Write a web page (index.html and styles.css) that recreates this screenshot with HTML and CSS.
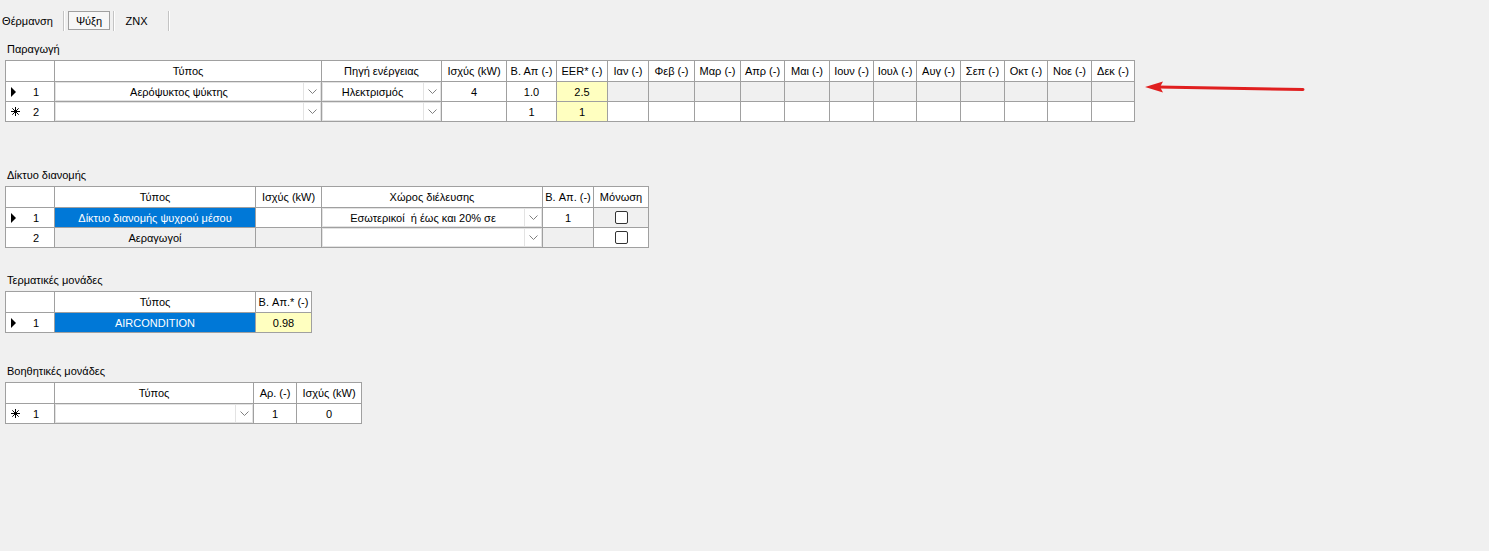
FILE: index.html
```html
<!DOCTYPE html>
<html lang="el">
<head>
  <meta charset="UTF-8" />
  <title>Ψύξη</title>
  <link rel="stylesheet" href="styles.css">
</head>
<body>

  <!-- toolbar -->
  <div class="toolbar">
    <span class="tool tool-heat">Θέρμανση</span>
    <span class="sep"></span>
    <span class="tool tool-cool checked">Ψύξη</span>
    <span class="sep"></span>
    <span class="tool tool-znx">ZNX</span>
    <span class="sep sep-last"></span>
  </div>

  <!-- Παραγωγή -->
  <div class="section sec-prod">
    <div class="caption">Παραγωγή</div>
    <div class="grid grid-prod">
      <div class="hd"></div>
      <div class="hd">Τύπος</div>
      <div class="hd">Πηγή ενέργειας</div>
      <div class="hd">Ισχύς (kW)</div>
      <div class="hd">B. Aπ (-)</div>
      <div class="hd">EER* (-)</div>
      <div class="hd">Ιαν (-)</div>
      <div class="hd">Φεβ (-)</div>
      <div class="hd">Μαρ (-)</div>
      <div class="hd">Απρ (-)</div>
      <div class="hd">Μαι (-)</div>
      <div class="hd">Ιουν (-)</div>
      <div class="hd">Ιουλ (-)</div>
      <div class="hd">Αυγ (-)</div>
      <div class="hd">Σεπ (-)</div>
      <div class="hd">Οκτ (-)</div>
      <div class="hd">Νοε (-)</div>
      <div class="hd">Δεκ (-)</div>

      <div class="rh"><span class="mark"><i class="tri"></i></span><span class="num">1</span></div>
      <div class="c"><div class="combo"><span class="combo-text combo-left">Αερόψυκτος ψύκτης</span><span class="combo-btn"><svg width="9" height="5" viewBox="0 0 9 5"><path d="M0.5 0.5 L4.5 4.5 L8.5 0.5" fill="none" stroke="#808080"/></svg></span></div></div>
      <div class="c"><div class="combo"><span class="combo-text">Ηλεκτρισμός</span><span class="combo-btn"><svg width="9" height="5" viewBox="0 0 9 5"><path d="M0.5 0.5 L4.5 4.5 L8.5 0.5" fill="none" stroke="#808080"/></svg></span></div></div>
      <div class="c">4</div>
      <div class="c">1.0</div>
      <div class="c yl">2.5</div>
      <div class="c ro"></div>
      <div class="c ro"></div>
      <div class="c ro"></div>
      <div class="c ro"></div>
      <div class="c ro"></div>
      <div class="c ro"></div>
      <div class="c ro"></div>
      <div class="c ro"></div>
      <div class="c ro"></div>
      <div class="c ro"></div>
      <div class="c ro"></div>
      <div class="c ro"></div>

      <div class="rh"><span class="mark"><svg class="star" width="9" height="9" viewBox="0 0 9 9"><path d="M4.5 0 V9 M0 4.5 H9 M1.3 1.3 L7.7 7.7 M7.7 1.3 L1.3 7.7" stroke="#000" stroke-width="1"/></svg></span><span class="num">2</span></div>
      <div class="c"><div class="combo"><span class="combo-text"></span><span class="combo-btn"><svg width="9" height="5" viewBox="0 0 9 5"><path d="M0.5 0.5 L4.5 4.5 L8.5 0.5" fill="none" stroke="#808080"/></svg></span></div></div>
      <div class="c"><div class="combo"><span class="combo-text"></span><span class="combo-btn"><svg width="9" height="5" viewBox="0 0 9 5"><path d="M0.5 0.5 L4.5 4.5 L8.5 0.5" fill="none" stroke="#808080"/></svg></span></div></div>
      <div class="c"></div>
      <div class="c">1</div>
      <div class="c yl">1</div>
      <div class="c"></div>
      <div class="c"></div>
      <div class="c"></div>
      <div class="c"></div>
      <div class="c"></div>
      <div class="c"></div>
      <div class="c"></div>
      <div class="c"></div>
      <div class="c"></div>
      <div class="c"></div>
      <div class="c"></div>
      <div class="c"></div>
    </div>
  </div>

  <!-- Δίκτυο διανομής -->
  <div class="section sec-net">
    <div class="caption">Δίκτυο διανομής</div>
    <div class="grid grid-net">
      <div class="hd"></div>
      <div class="hd">Τύπος</div>
      <div class="hd">Ισχύς (kW)</div>
      <div class="hd">Χώρος διέλευσης</div>
      <div class="hd">B. Απ. (-)</div>
      <div class="hd">Μόνωση</div>

      <div class="rh"><span class="mark"><i class="tri"></i></span><span class="num">1</span></div>
      <div class="c sel">Δίκτυο διανομής ψυχρού μέσου</div>
      <div class="c"></div>
      <div class="c"><div class="combo"><span class="combo-text">Εσωτερικοί &nbsp;ή έως και 20% σε</span><span class="combo-btn"><svg width="9" height="5" viewBox="0 0 9 5"><path d="M0.5 0.5 L4.5 4.5 L8.5 0.5" fill="none" stroke="#808080"/></svg></span></div></div>
      <div class="c">1</div>
      <div class="c ro"><span class="check"></span></div>

      <div class="rh"><span class="mark"></span><span class="num">2</span></div>
      <div class="c ro">Αεραγωγοί</div>
      <div class="c ro"></div>
      <div class="c"><div class="combo"><span class="combo-text"></span><span class="combo-btn"><svg width="9" height="5" viewBox="0 0 9 5"><path d="M0.5 0.5 L4.5 4.5 L8.5 0.5" fill="none" stroke="#808080"/></svg></span></div></div>
      <div class="c ro"></div>
      <div class="c"><span class="check"></span></div>
    </div>
  </div>

  <!-- Τερματικές μονάδες -->
  <div class="section sec-term">
    <div class="caption">Τερματικές μονάδες</div>
    <div class="grid grid-term">
      <div class="hd"></div>
      <div class="hd">Τύπος</div>
      <div class="hd">B. Απ.* (-)</div>

      <div class="rh"><span class="mark"><i class="tri"></i></span><span class="num">1</span></div>
      <div class="c sel">AIRCONDITION</div>
      <div class="c yl">0.98</div>
    </div>
  </div>

  <!-- Βοηθητικές μονάδες -->
  <div class="section sec-aux">
    <div class="caption">Βοηθητικές μονάδες</div>
    <div class="grid grid-aux">
      <div class="hd"></div>
      <div class="hd">Τύπος</div>
      <div class="hd">Αρ. (-)</div>
      <div class="hd">Ισχύς (kW)</div>

      <div class="rh"><span class="mark"><svg class="star" width="9" height="9" viewBox="0 0 9 9"><path d="M4.5 0 V9 M0 4.5 H9 M1.3 1.3 L7.7 7.7 M7.7 1.3 L1.3 7.7" stroke="#000" stroke-width="1"/></svg></span><span class="num">1</span></div>
      <div class="c"><div class="combo"><span class="combo-text"></span><span class="combo-btn"><svg width="9" height="5" viewBox="0 0 9 5"><path d="M0.5 0.5 L4.5 4.5 L8.5 0.5" fill="none" stroke="#808080"/></svg></span></div></div>
      <div class="c">1</div>
      <div class="c">0</div>
    </div>
  </div>

  <!-- annotation arrow -->
  <svg class="red-arrow" width="170" height="24" viewBox="0 0 170 24">
    <path d="M18 11 L163 13.5" stroke="#e01f1f" stroke-width="3" stroke-linecap="round"/>
    <path d="M5 11 L23 5.5 L20 11 L23 16.5 Z" fill="#e01f1f"/>
  </svg>

</body>
</html>
```

FILE: styles.css
```css
body {
  margin: 0;
  background: #f0f0f0;
  font-family: "Liberation Sans", Arial, sans-serif;
  font-size: 11px;
  color: #000;
  position: relative;
  height: 551px;
  overflow: hidden;
}

/* toolbar */
.toolbar {
  display: flex;
  margin-top: 11px;
  height: 20px;
}
.tool {
  display: flex;
  align-items: center;
  justify-content: center;
  height: 19px;
  box-sizing: border-box;
}
.tool-heat { width: 55px; }
.tool-cool {
  width: 42px;
  margin-left: 3px;
}
.tool-znx {
  width: 39px;
  margin-left: 2px;
}
.checked {
  border: 1px solid #a0a0a0;
  background: #f7f7f7;
}
.sep {
  width: 1px;
  height: 20px;
  margin-left: 8px;
  background: #c4c4c4;
  border-right: 1px solid #fff;
}
.sep + .tool-cool { margin-left: 3px; }
.tool-cool + .sep { margin-left: 3px; }
.sep-last { margin-left: 12px; }

/* sections */
.section {
  padding-left: 5px;
}
.caption {
  height: 13px;
  line-height: 13px;
  padding-left: 2px;
  margin-bottom: 4px;
}
.sec-prod { margin-top: 12px; }
.sec-net { margin-top: 47px; }
.sec-term { margin-top: 26px; }
.sec-aux { margin-top: 32px; }

/* grids */
.grid {
  display: inline-grid;
  gap: 1px;
  background: #a0a0a0;
  border: 1px solid #a0a0a0;
  grid-template-rows: 20px;
  grid-auto-rows: 19px;
}
.grid-prod {
  grid-template-columns: 48px 266px 119px 64px 49px 50px 40px 45px 45px 43px 44px 43px 42px 43px 43px 42px 43px 42px;
}
.grid-net {
  grid-template-columns: 48px 200px 65px 220px 50px 54px;
}
.grid-term {
  grid-template-columns: 48px 200px 55px;
}
.grid-aux {
  grid-template-columns: 48px 198px 42px 64px;
}

.hd, .c {
  display: flex;
  align-items: center;
  justify-content: center;
  white-space: nowrap;
  overflow: hidden;
  background: #fff;
}
.ro { background: #f0f0f0; }
.yl { background: #ffffc0; }
.sel {
  background: #0078d7;
  color: #fff;
}

/* row header */
.rh {
  display: flex;
  align-items: center;
  background: #fff;
  padding-left: 5px;
}
.mark {
  width: 15px;
  height: 10px;
  display: flex;
  align-items: center;
}
.tri {
  display: block;
  width: 0;
  height: 0;
  border-top: 5px solid transparent;
  border-bottom: 5px solid transparent;
  border-left: 5px solid #000;
}
.star { display: block; }
.num {
  width: 20px;
  text-align: center;
}

/* combo box cell */
.combo {
  display: flex;
  width: 100%;
  height: 100%;
  box-sizing: border-box;
  box-shadow: inset 0 0 0 1px #e3e3e3;
}
.combo-text {
  flex: 1;
  display: flex;
  align-items: center;
  justify-content: center;
}
.combo-btn {
  width: 17px;
  display: flex;
  align-items: center;
  justify-content: center;
  border-left: 1px solid #e3e3e3;
}

/* checkbox */
.check {
  width: 13px;
  height: 13px;
  box-sizing: border-box;
  border: 1px solid #333;
  border-radius: 2px;
  background: #fff;
}

/* annotation overlay */
.red-arrow {
  position: absolute;
  left: 1140px;
  top: 76px;
}
```
